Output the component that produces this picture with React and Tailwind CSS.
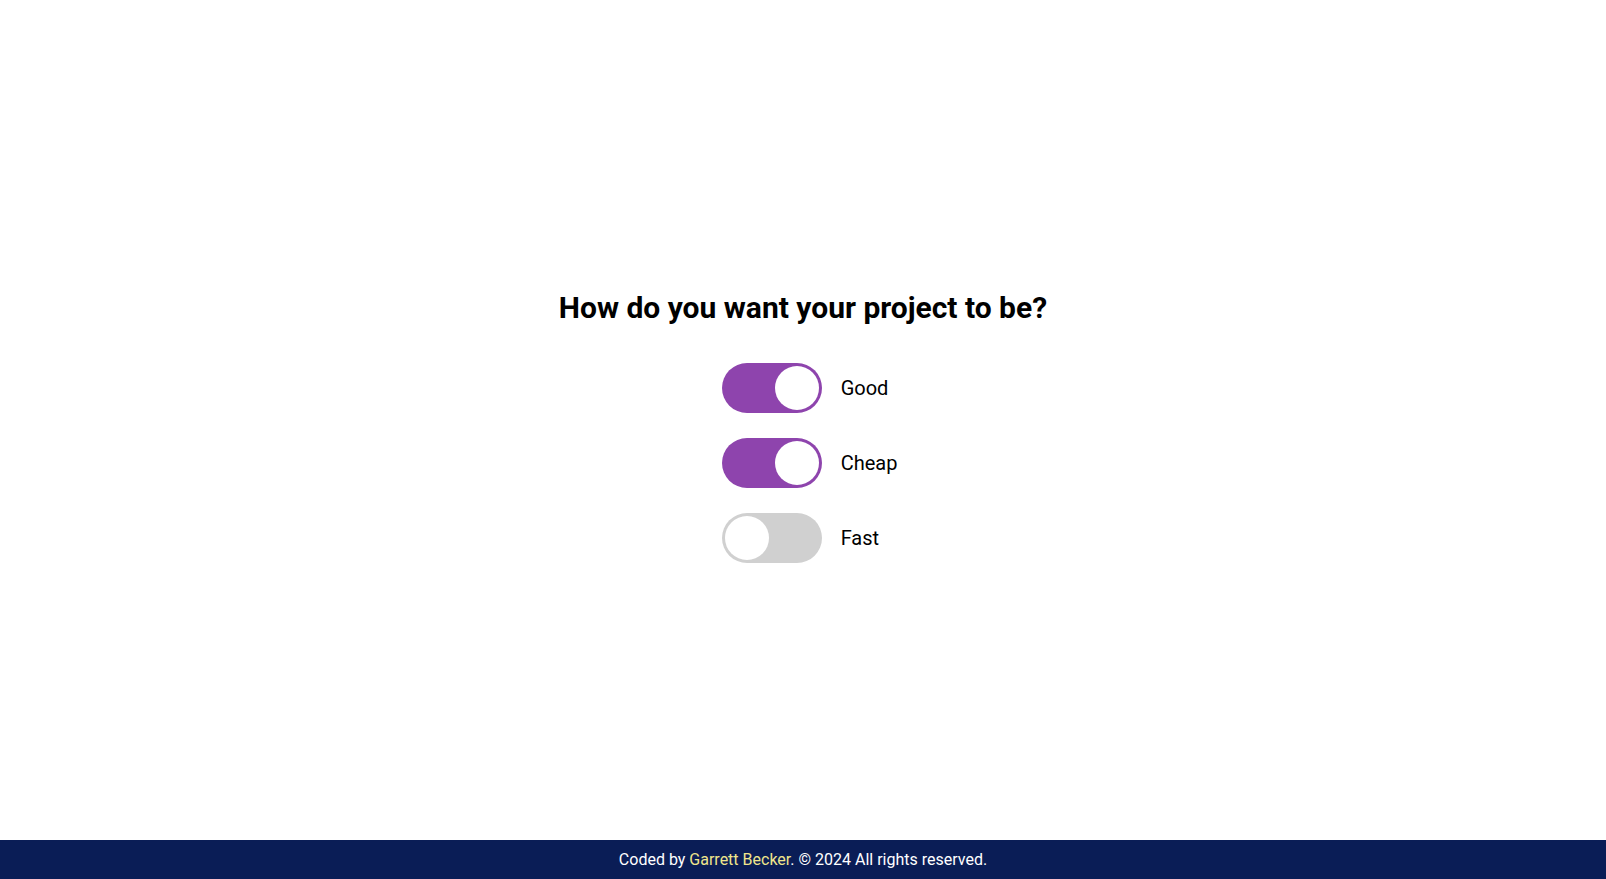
import React, { useState } from 'react';

const Toggle = ({ label, checked, onChange }) => (
  <label className="flex items-center gap-[19px] cursor-pointer select-none">
    <span
      className={`relative block w-[100px] h-[50px] rounded-full transition-colors ${
        checked ? 'bg-[#8e44ad]' : 'bg-[#d0d0d0]'
      }`}
    >
      <input type="checkbox" className="sr-only" checked={checked} onChange={onChange} />
      <span
        className={`absolute top-[3px] w-[44px] h-[44px] rounded-full bg-white transition-all ${
          checked ? 'left-[53px]' : 'left-[3px]'
        }`}
      />
    </span>
    <span className="text-[20px] text-black">{label}</span>
  </label>
);

const App = () => {
  const [opts, setOpts] = useState({ good: true, cheap: true, fast: false });

  // only two of the three at a time
  const toggle = (key) => {
    setOpts((prev) => {
      const next = { ...prev, [key]: !prev[key] };
      const on = Object.keys(next).filter((k) => next[k]);
      if (on.length === 3) {
        const other = on.find((k) => k !== key);
        next[other] = false;
      }
      return next;
    });
  };

  return (
    <div className="min-h-screen flex flex-col bg-white font-['Roboto',sans-serif]">
      <main className="flex-1 flex flex-col items-center justify-center pt-[13px]">
        <h1 className="text-[30px] leading-[36px] font-bold text-black">How do you want your project to be?</h1>
        <div className="mt-[37px] flex flex-col gap-[25px] ml-[13px]">
          <Toggle label="Good" checked={opts.good} onChange={() => toggle('good')} />
          <Toggle label="Cheap" checked={opts.cheap} onChange={() => toggle('cheap')} />
          <Toggle label="Fast" checked={opts.fast} onChange={() => toggle('fast')} />
        </div>
      </main>
      <footer className="bg-[#0a1d56] py-[10px] text-center text-white text-base leading-[19px]">
        Coded by <a href="#" className="text-[#f0e68c]">Garrett Becker</a>. © 2024 All rights reserved.
      </footer>
    </div>
  );
};

export default App;
